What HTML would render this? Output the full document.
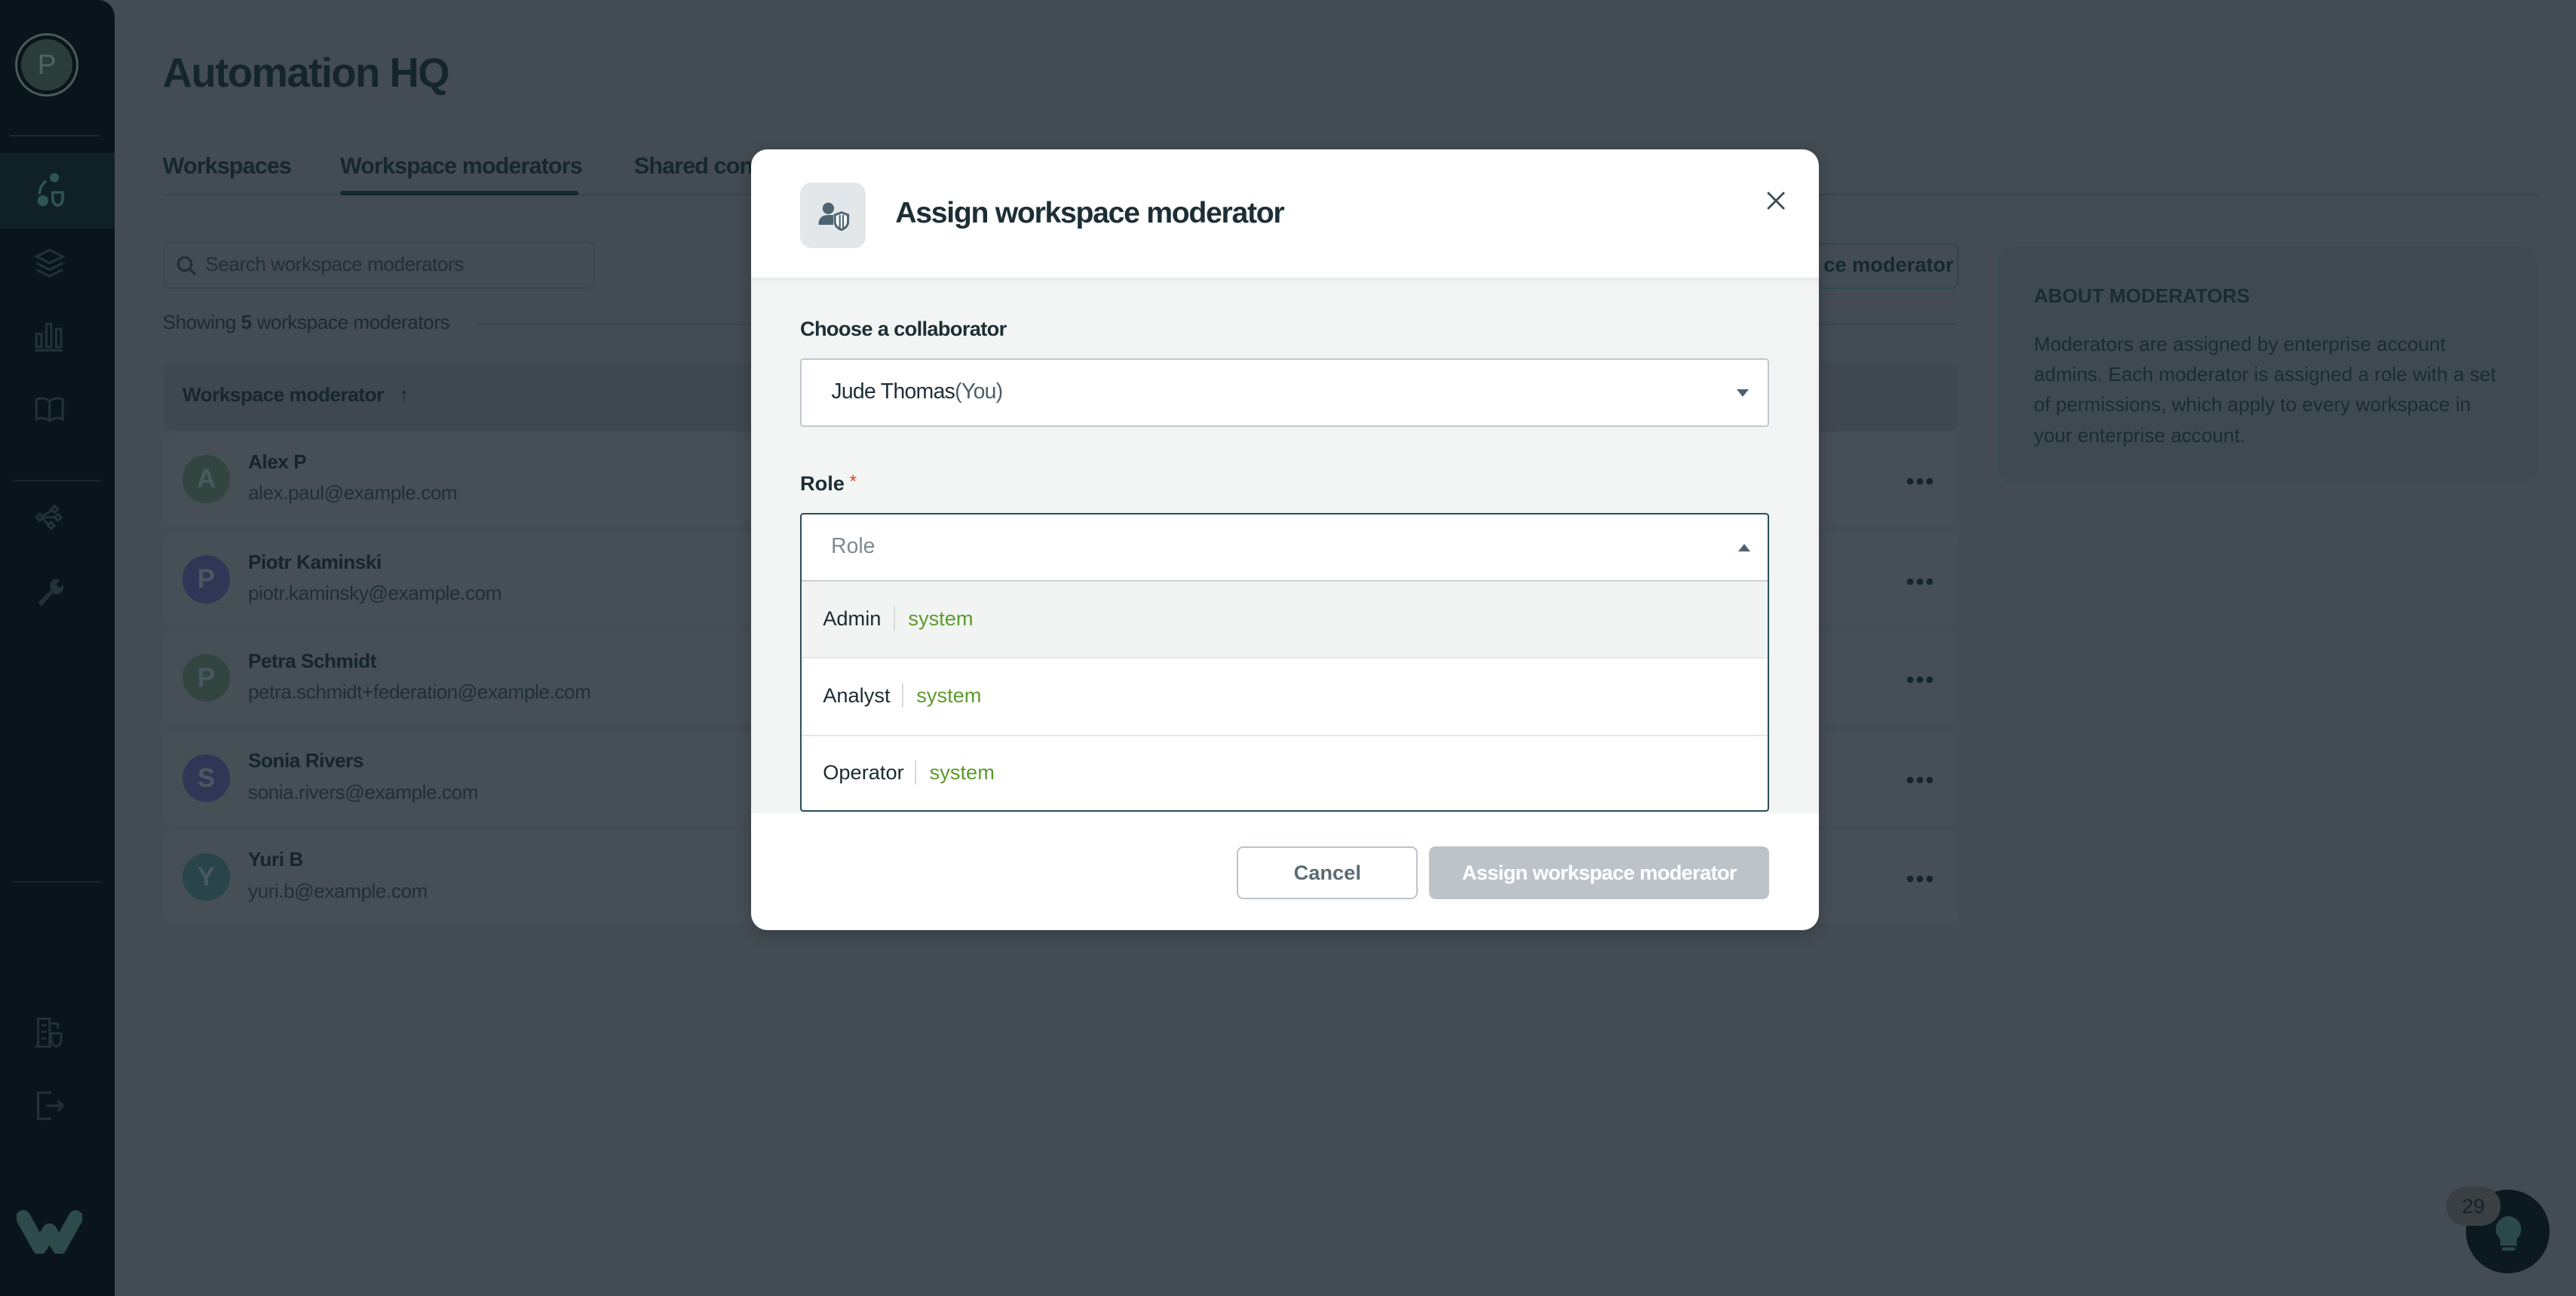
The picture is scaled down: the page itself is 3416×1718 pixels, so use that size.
<!DOCTYPE html>
<html><head><meta charset="utf-8">
<style>
html,body{margin:0;padding:0;width:3416px;height:1718px;overflow:hidden;background:#434b53}
#w{zoom:2.178571;width:1568px;height:789px;position:relative;font-family:"Liberation Sans",sans-serif;color:#14262b;overflow:hidden;background:#434b53}
.a{position:absolute}
.sb{left:0;top:0;width:70px;height:789px;background:#0a151b;border-top-right-radius:10px;overflow:hidden}
.t{white-space:nowrap}
.row{left:99px;width:1093px;height:57px;background:#464e56;border-radius:6px}
.av{left:12px;top:14px;width:29px;height:29px;border-radius:50%;color:#4a5860;font-weight:bold;font-size:16px;text-align:center;line-height:29px}
.nm{left:52px;top:11px;font-size:12px;font-weight:bold;color:#14262b;letter-spacing:-0.2px}
.em{left:52px;top:30px;font-size:12px;color:#1e3036;letter-spacing:-0.2px}
.dots{right:14px;top:22px;font-size:14px;letter-spacing:1px;color:#14262b;font-weight:bold}
.opt{left:0;width:589px;height:46px;border-top:1px solid #e4e8ea;font-size:12.5px;color:#1c2b30}
.opt span.n{position:absolute;left:13px;top:15px}
.opt span.s{position:absolute;top:15px;color:#5c9a2a;padding-left:8px;border-left:1px solid #d4d9dc}
</style></head><body><div id="w">
<div class="a sb">
 <div class="a" style="left:9px;top:20px;width:36px;height:36px;border-radius:50%;border:1.5px solid #4a5a5e;"></div>
 <div class="a" style="left:13px;top:24px;width:31px;height:31px;border-radius:50%;background:#2a3d3b;color:#4f6561;font-size:17px;text-align:center;line-height:31px">P</div>
 <div class="a" style="left:6px;top:82px;width:55px;height:1px;background:#1e2b30"></div>
 <div class="a" style="left:0;top:93px;width:70px;height:46px;background:#0f2126"></div>
 <svg class="a" style="left:21px;top:105px" width="20" height="22" viewBox="0 0 20 22" fill="none" stroke="#2f5555" stroke-width="1.6"><circle cx="12" cy="3" r="2" fill="#2f5555"/><circle cx="5" cy="17" r="2.5" fill="#2f5555"/><path d="M7 5 Q3 8 3 13"/><path d="M11 12 h6 v4 q0 3 -3 4 q-3 -1 -3 -4z"/></svg>
 <svg class="a" style="left:20px;top:150px" width="20" height="22" viewBox="0 0 20 22" fill="none" stroke="#223238" stroke-width="1.4"><path d="M10 2 L18 6 L10 10 L2 6Z"/><path d="M2 10 L10 14 L18 10"/><path d="M2 14 L10 18 L18 14"/></svg>
 <svg class="a" style="left:20px;top:194px" width="20" height="20" viewBox="0 0 20 20" fill="none" stroke="#223238" stroke-width="1.4"><rect x="2" y="9" width="3" height="8"/><rect x="8" y="3" width="3" height="14"/><rect x="14" y="6" width="3" height="11"/><path d="M1 19 h17"/></svg>
 <svg class="a" style="left:20px;top:239px" width="20" height="20" viewBox="0 0 20 20" fill="none" stroke="#223238" stroke-width="1.4"><path d="M2 4 Q6 2 10 5 Q14 2 18 4 V16 Q14 14 10 17 Q6 14 2 16Z M10 5 V17"/></svg>
 <div class="a" style="left:8px;top:292px;width:54px;height:1px;background:#1a262b"></div>
 <svg class="a" style="left:20px;top:305px" width="20" height="20" viewBox="0 0 20 20" fill="none" stroke="#223238" stroke-width="1.4"><path d="M13 3 l2 2 -2 2 -2 -2z M4 8 l2 2 -2 2 -2 -2z M15 8 l2 2 -2 2 -2 -2z M11 13 l2 2 -2 2 -2 -2z M6 10 h7 M6 9 L11 6 M6 11 L9 14"/></svg>
 <svg class="a" style="left:20px;top:350px" width="20" height="20" viewBox="0 0 20 20"><path d="M3 17 L11 9 A4 4 0 0 1 16 3 L14 6 L16 8 L18 6 A4 4 0 0 1 12 11 L5 19Z" fill="#223238"/></svg>
 <svg class="a" style="left:20px;top:618px" width="20" height="22" viewBox="0 0 20 22" fill="none" stroke="#223238" stroke-width="1.3"><path d="M3 2 h7 v17 H3Z M1 19 h10 M5 6 h3 M5 10 h3 M5 14 h3 M10 5 h5 v3"/><path d="M11 11 h6 v4 q0 3 -3 4 q-3 -1 -3 -4z"/></svg>
 <svg class="a" style="left:20px;top:663px" width="20" height="20" viewBox="0 0 20 20" fill="none" stroke="#223238" stroke-width="1.4"><path d="M11 2 H3 V18 H11 M8 10 H18 M15 7 L18 10 L15 13"/></svg>
 <div class="a" style="left:8px;top:536px;width:54px;height:1px;background:#1a262b;top:536px"></div>
 <svg class="a" style="left:10px;top:735px" width="40" height="28" viewBox="0 0 40 28"><path d="M4 6 L14 24 L20 14 L26 24 L36 6" fill="none" stroke="#2e4b4b" stroke-width="9" stroke-linecap="round" stroke-linejoin="round"/></svg>
</div>

<div class="a t" style="left:99px;top:30px;font-size:25px;font-weight:bold;letter-spacing:-0.7px">Automation HQ</div>
<div class="a t" style="left:99px;top:93px;font-size:14px;font-weight:bold;color:#15282d;letter-spacing:-0.4px">Workspaces</div>
<div class="a t" style="left:207px;top:93px;font-size:14px;font-weight:bold;color:#15282d;letter-spacing:-0.4px">Workspace moderators</div>
<div class="a t" style="left:386px;top:93px;font-size:14px;font-weight:bold;color:#15282d;letter-spacing:-0.4px">Shared con</div>
<div class="a" style="left:99px;top:118px;width:1446px;height:1px;background:#3a434b"></div>
<div class="a" style="left:207px;top:116px;width:145px;height:3px;background:#15282d;border-radius:2px"></div>
<div class="a" style="left:99px;top:147px;width:263px;height:29px;border:1px solid #3c454d;border-radius:4px;box-sizing:border-box"></div>
<svg class="a" style="left:107px;top:155px" width="13" height="13" viewBox="0 0 13 13" fill="none" stroke="#1e3036" stroke-width="1.5"><circle cx="5.5" cy="5.5" r="4"/><path d="M8.5 8.5 L12 12"/></svg>
<div class="a t" style="left:125px;top:154px;font-size:12px;color:#1f3137;letter-spacing:-0.2px">Search workspace moderators</div>
<div class="a t" style="left:99px;top:189px;font-size:12px;color:#1b2c31;letter-spacing:-0.2px">Showing <b>5</b> workspace moderators</div>
<div class="a" style="left:291px;top:197px;width:900px;height:1px;background:#3a434b"></div>
<div class="a" style="left:1000px;top:148px;width:192px;height:28px;border:1px solid #2b4a4c;border-radius:4px;box-sizing:border-box"></div>
<div class="a t" style="left:1110px;top:154px;font-size:12.5px;font-weight:bold;color:#15292d">ce moderator</div>

<div class="a" style="left:99px;top:221px;width:1093px;height:41px;background:#3f474f;border-radius:6px"></div>
<div class="a t" style="left:111px;top:233px;font-size:12px;font-weight:bold;color:#15282d;letter-spacing:-0.2px">Workspace moderator &nbsp; ↑</div>

<div class="a row" style="top:263px"><div class="a av" style="background:#334540">A</div><div class="a nm t">Alex P</div><div class="a em t">alex.paul@example.com</div><div class="a dots">•••</div></div>
<div class="a row" style="top:324px"><div class="a av" style="background:#303756">P</div><div class="a nm t">Piotr Kaminski</div><div class="a em t">piotr.kaminsky@example.com</div><div class="a dots">•••</div></div>
<div class="a row" style="top:384px"><div class="a av" style="background:#334540">P</div><div class="a nm t">Petra Schmidt</div><div class="a em t">petra.schmidt+federation@example.com</div><div class="a dots">•••</div></div>
<div class="a row" style="top:445px"><div class="a av" style="background:#303756">S</div><div class="a nm t">Sonia Rivers</div><div class="a em t">sonia.rivers@example.com</div><div class="a dots">•••</div></div>
<div class="a row" style="top:505px"><div class="a av" style="background:#284549">Y</div><div class="a nm t">Yuri B</div><div class="a em t">yuri.b@example.com</div><div class="a dots">•••</div></div>

<div class="a" style="left:1216px;top:149px;width:329px;height:146px;border:1px solid #3c4f54;border-radius:10px;box-sizing:border-box;background:#3f4a50"></div>
<div class="a t" style="left:1238px;top:173px;font-size:12px;font-weight:bold;color:#1a2c31">ABOUT MODERATORS</div>
<div class="a" style="left:1238px;top:200px;width:285px;font-size:12px;line-height:18.5px;color:#1a2c31">Moderators are assigned by enterprise account admins. Each moderator is assigned a role with a set of permissions, which apply to every workspace in your enterprise account.</div>

<div class="a" style="left:1501px;top:724px;width:51px;height:51px;border-radius:50%;background:#0c1a1f"></div>
<svg class="a" style="left:1513px;top:734px" width="28" height="32" viewBox="0 0 28 32"><path d="M14 6 a8 8 0 0 1 5 14 v4 h-10 v-4 a8 8 0 0 1 5 -14z" fill="#2a4a4a"/><rect x="10" y="25" width="8" height="2" fill="#2a4a4a"/></svg>
<div class="a" style="left:1489px;top:722px;width:33px;height:24px;border-radius:12px;background:#3a3f44;color:#15232a;font-size:12.5px;text-align:center;line-height:24px">29</div>

<!-- modal -->
<div class="a" style="left:457px;top:91px;width:650px;height:475px;background:#fff;border-radius:10px;overflow:hidden;box-shadow:0 2px 10px rgba(0,0,0,.2)">
 <div class="a" style="left:0;top:78px;width:650px;height:326px;background:#f3f5f5;box-shadow:inset 0 2px 3px rgba(0,0,0,.05)"></div>
 <div class="a" style="left:30px;top:20px;width:40px;height:40px;border-radius:7px;background:#e3e7ea"></div>
 <svg class="a" style="left:39px;top:29px" width="22" height="22" viewBox="0 0 22 22"><circle cx="8" cy="7" r="3.5" fill="#4e6472"/><path d="M2 17 q0 -6 6 -6 h3 v6z" fill="#4e6472"/><path d="M12 11 l4 -1.5 4 1.5 v4 q0 3.5 -4 5 q-4 -1.5 -4 -5z" fill="#fff" stroke="#4e6472" stroke-width="1.4"/><path d="M15 11 v8 M17 11 v8" stroke="#4e6472" stroke-width="1"/></svg>
 <div class="a t" style="left:88px;top:29px;font-size:18px;font-weight:bold;color:#1d2e35;letter-spacing:-0.6px">Assign workspace moderator</div>
 <svg class="a" style="left:618px;top:25px" width="12" height="12" viewBox="0 0 12 12" stroke="#3c4d55" stroke-width="1.3"><path d="M1 1 L11 11 M11 1 L1 11"/></svg>
 <div class="a t" style="left:30px;top:102px;font-size:12.5px;font-weight:bold;color:#1d2e35;letter-spacing:-0.3px">Choose a collaborator</div>
 <div class="a" style="left:30px;top:127px;width:590px;height:42px;background:#fff;border:1px solid #c2c8cd;border-radius:2px;box-sizing:border-box"></div>
 <div class="a t" style="left:49px;top:140px;font-size:13px;color:#1d2e35;letter-spacing:-0.3px">Jude Thomas<span style="color:#4d5d66">(You)</span></div>
 <div class="a" style="left:600px;top:146px;width:0;height:0;border-left:4px solid transparent;border-right:4px solid transparent;border-top:5px solid #4e6170"></div>
 <div class="a t" style="left:30px;top:196px;font-size:12.5px;font-weight:bold;color:#1d2e35">Role<span style="color:#d0452a;font-weight:normal;font-size:11px;vertical-align:top"> *</span></div>
 <div class="a" style="left:30px;top:221px;width:590px;height:182px;background:#fff;border:1px solid #2b4f55;border-radius:2px;box-sizing:border-box;overflow:hidden">
  <div class="a t" style="left:18px;top:12px;font-size:13px;color:#7d8a91">Role</div>
  <div class="a" style="left:570px;top:18px;width:0;height:0;border-left:4px solid transparent;border-right:4px solid transparent;border-bottom:5px solid #4e6170"></div>
  <div class="a opt" style="top:40px;background:#f2f4f4;border-top:1px solid #c9cfd3"><span class="n">Admin</span><span class="s" style="left:56px">system</span></div>
  <div class="a opt" style="top:87px"><span class="n">Analyst</span><span class="s" style="left:61px">system</span></div>
  <div class="a opt" style="top:134px"><span class="n">Operator</span><span class="s" style="left:69px">system</span></div>
 </div>
 <div class="a" style="left:296px;top:424px;width:110px;height:32px;border:1px solid #bcc3c9;border-radius:4px;box-sizing:border-box;text-align:center;line-height:30px;font-size:12.5px;font-weight:bold;color:#5c6c75">Cancel</div>
 <div class="a" style="left:413px;top:424px;width:207px;height:32px;border-radius:4px;background:#bcc4ca;text-align:center;line-height:32px;font-size:12.5px;font-weight:bold;color:#fff;letter-spacing:-0.3px">Assign workspace moderator</div>
</div>
</div></body></html>
